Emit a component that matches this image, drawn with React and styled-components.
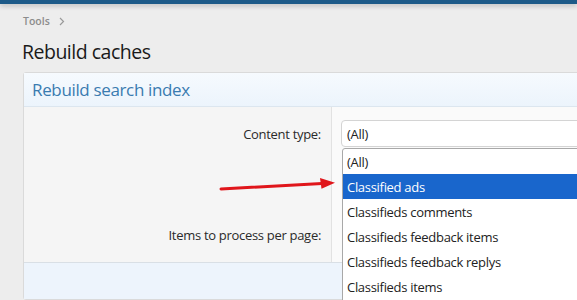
import React from 'react';
import styled, { createGlobalStyle } from 'styled-components';

const GlobalStyle = createGlobalStyle`
  html, body {
    margin: 0;
    padding: 0;
    background: #ededed;
    overflow: hidden;
  }
  body {
    font-family: 'Open Sans', 'Noto Sans', sans-serif;
    color: #141414;
  }
`;

const Page = styled.div`
  width: 577px;
  height: 300px;
  overflow: hidden;
  position: relative;
`;

const TopBar = styled.div`
  height: 4px;
  background: #1d5a88;
  box-shadow: 0 2px 5px rgba(0, 0, 0, 0.22);
`;

const Main = styled.div`
  padding: 9px 0 0 23px;
`;

const Breadcrumb = styled.div`
  font-size: 10.5px;
  font-weight: 600;
  color: #8c8c8c;
  display: flex;
  align-items: center;
  gap: 9px;
  height: 16px;
`;

const Title = styled.h1`
  margin: 9px 0 0 -1px;
  font-size: 19.5px;
  letter-spacing: -0.5px;
  font-weight: 400;
  line-height: 28px;
  color: #1a1a1a;
`;

const Block = styled.div`
  margin-top: 6px;
  width: 620px;
  border: 1px solid #dadada;
  border-radius: 3px;
  background: #f5f5f5;
`;

const BlockHeader = styled.h2`
  margin: 0;
  padding: 0 8px;
  height: 33px;
  line-height: 33px;
  font-size: 17px;
  letter-spacing: -0.35px;
  font-weight: 400;
  color: #3a7bb0;
  background: linear-gradient(#f6fafe, #ecf4fc);
  border-bottom: 1px solid #dce6ef;
`;

const FormBody = styled.div`
  display: grid;
  grid-template-columns: 308px 1fr;
`;

const Label = styled.div`
  border-right: 1px solid #e2e2e2;
  font-size: 13px;
  letter-spacing: -0.3px;
  color: #2a2a2a;
  text-align: right;
  padding: 0 10px 0 0;
  height: ${p => p.$h}px;
  line-height: ${p => p.$h + 1}px;
`;

const Control = styled.div`
  background: #fafafa;
  padding: ${p => p.$pt}px 0 0 9px;
  height: ${p => p.$h}px;
  box-sizing: border-box;
`;

const SelectBox = styled.div`
  position: relative;
  height: 27px;
  line-height: 26px;
  box-sizing: border-box;
  border: 1px solid #d4d4d4;
  border-radius: 4px;
  background: #fff;
  font-size: 13px;
  letter-spacing: -0.3px;
  padding-left: 5px;
  color: #222;
`;

const Dropdown = styled.ul`
  position: absolute;
  left: 0;
  top: 27px;
  width: 300px;
  margin: 0;
  padding: 0 0 30px;
  list-style: none;
  background: #fff;
  border: 1px solid #a8a8a8;
  border-radius: 3px 0 0 0;
  z-index: 5;
`;

const Option = styled.li`
  height: 25px;
  line-height: 26px;
  padding-left: 4px;
  font-size: 13px;
  letter-spacing: -0.3px;
  color: ${p => (p.$active ? '#ffffff' : '#222')};
  background: ${p => (p.$active ? '#1966cc' : 'transparent')};
`;

const Footer = styled.div`
  height: 36px;
  border-top: 1px solid #d9dfe5;
  background: #edf4fc;
`;

const Arrow = styled.svg`
  position: absolute;
  left: 218px;
  top: 176px;
  z-index: 6;
`;

const options = [
  '(All)',
  'Classified ads',
  'Classifieds comments',
  'Classifieds feedback items',
  'Classifieds feedback replys',
  'Classifieds items',
];

export default function App() {
  return (
    <>
      <GlobalStyle />
      <Page>
        <TopBar />
        <Main>
          <Breadcrumb>
            <span>Tools</span>
            <svg width="6" height="9" viewBox="0 0 6 9">
              <path d="M1 1l3.5 3.5L1 8" fill="none" stroke="#9a9a9a" strokeWidth="1.2" />
            </svg>
          </Breadcrumb>
          <Title>Rebuild caches</Title>
          <Block>
            <BlockHeader>Rebuild search index</BlockHeader>
            <FormBody>
              <Label $h={54}>Content type:</Label>
              <Control $h={54} $pt={13}>
                <SelectBox>
                  (All)
                  <Dropdown>
                    {options.map((o, i) => (
                      <Option key={o} $active={i === 1}>{o}</Option>
                    ))}
                  </Dropdown>
                </SelectBox>
              </Control>
              <Label $h={46}></Label>
              <Control $h={46} $pt={0} />
              <Label $h={55}>Items to process per page:</Label>
              <Control $h={55} $pt={0} />
            </FormBody>
            <Footer />
          </Block>
        </Main>
        <Arrow width="120" height="20" viewBox="0 0 120 20">
          <path d="M3 13 L104 7.5" stroke="#e0161b" strokeWidth="3" strokeLinecap="round" fill="none" />
          <path d="M117 6.8 L102 2 L103.5 12.8 Z" fill="#e0161b" />
        </Arrow>
      </Page>
    </>
  );
}
